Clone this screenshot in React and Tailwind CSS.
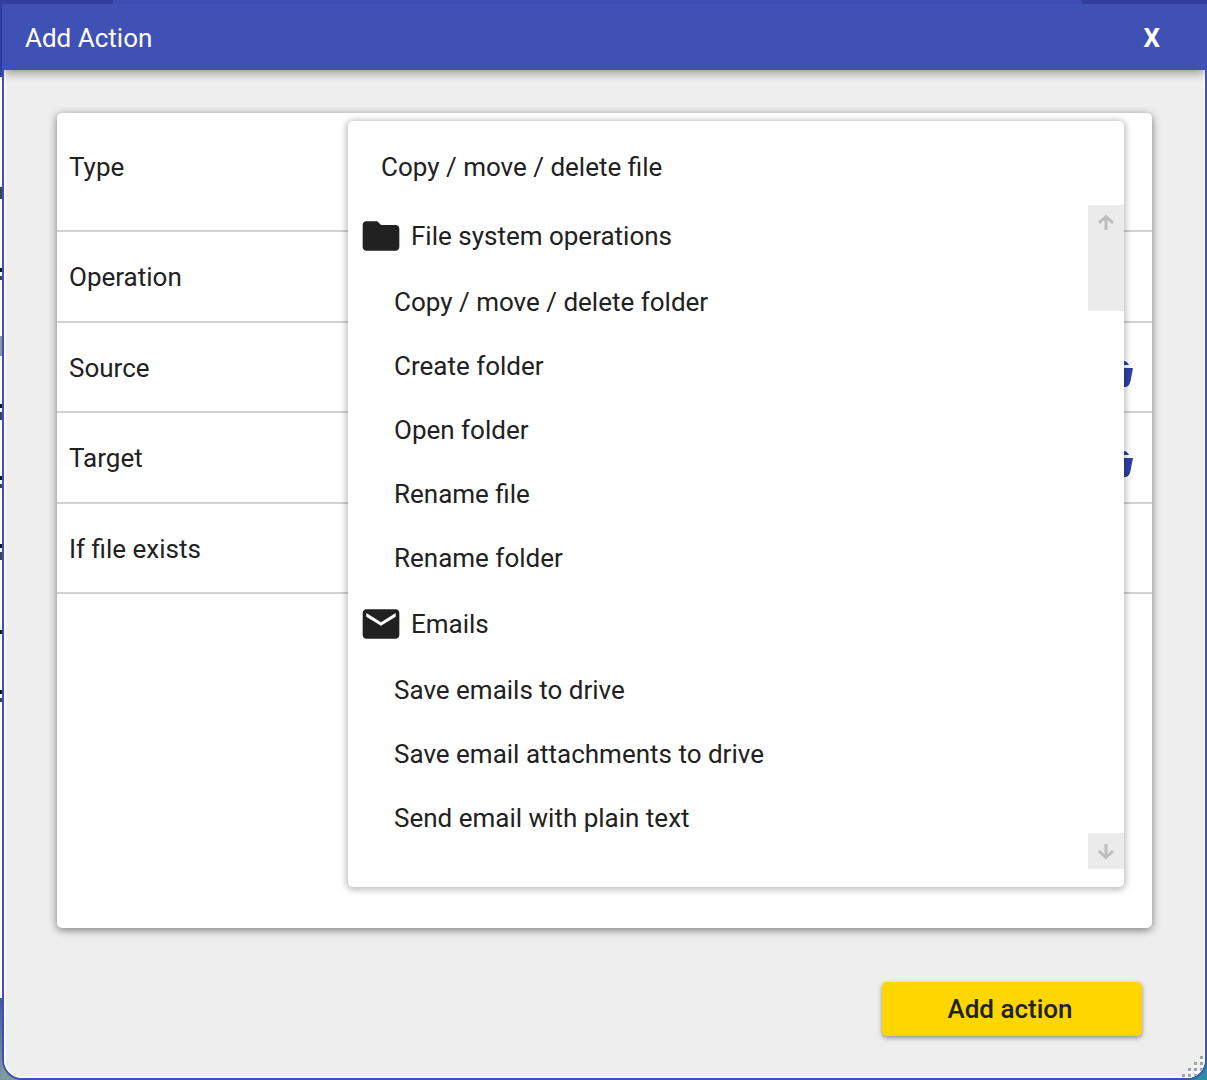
import React from "react";
import { MdFolder, MdEmail } from "react-icons/md";

const groups = [
  {
    label: "File system operations",
    Icon: MdFolder,
    options: [
      "Copy / move / delete folder",
      "Create folder",
      "Open folder",
      "Rename file",
      "Rename folder",
    ],
  },
  {
    label: "Emails",
    Icon: MdEmail,
    options: [
      "Save emails to drive",
      "Save email attachments to drive",
      "Send email with plain text",
    ],
  },
];

const fields = [
  { label: "Operation" },
  { label: "Source", removable: true },
  { label: "Target", removable: true },
  { label: "If file exists" },
];

/* Sliver of the window behind the dialog's left edge */
function BackgroundEdge() {
  return (
    <div className="flex w-0.5 shrink-0 flex-col bg-white" aria-hidden="true">
      <div className="h-[77px] bg-[#303f9f]" />
      <div className="mt-[110px] h-3 bg-[#3a4256]" />
      <div className="mt-[69px] h-1 bg-[#111827]" />
      <div className="mt-1 h-1 bg-[#3a4256]" />
      <div className="mt-14 h-5 bg-[#8c94a6]" />
      <div className="mt-12 h-1 bg-[#111827]" />
      <div className="mt-1 h-2 bg-[#3a4256]" />
      <div className="mt-14 h-1 bg-[#111827]" />
      <div className="mt-1 h-1 bg-[#3a4256]" />
      <div className="mt-14 h-1 bg-[#111827]" />
      <div className="mt-1 h-2 bg-[#3a4256]" />
      <div className="mt-[70px] h-1 bg-[#111827]" />
      <div className="mt-14 h-1 bg-[#111827]" />
      <div className="mt-1 h-1 bg-[#3a4256]" />
      <div className="h-[296px]" />
      <div className="flex-1 bg-linear-to-b from-[#4558a0] to-[#809b9f]" />
    </div>
  );
}

function TrashIcon() {
  return (
    <svg viewBox="0 0 26 28" className="h-7 w-[26px]" fill="currentColor" aria-hidden="true">
      <path d="M9 1h8c2 0 3.500 1.500 5 4H4c1.500-2.500 3-4 5-4z" />
      <path d="M0 8h26l-2.500 13c-.8 4-2.800 6-5.500 6H8c-2.700 0-4.700-2-5.500-6z" />
    </svg>
  );
}

function ArrowIcon({ down }) {
  return (
    <svg viewBox="0 0 24 24" className="size-6" fill="none" stroke="currentColor" strokeWidth="3" aria-hidden="true">
      {down ? <path d="M12 5v13M5 12l7 6.500 7-6.500" /> : <path d="M12 19V6M5 12l7-6.500 7 6.500" />}
    </svg>
  );
}

function ResizeGrip() {
  return (
    <svg viewBox="0 0 24 24" className="absolute right-0 bottom-0 size-6" aria-hidden="true">
      <g fill="#ffffff">
        <path d="M19 3h4v4h-4zM13 9h4v4h-4zM19 9h4v4h-4zM7 15h4v4H7zM13 15h4v4h-4zM19 15h4v4h-4zM1 20h4v4H1zM7 20h4v4H7zM13 20h4v4h-4z" />
      </g>
      <g fill="#9aa3b2">
        <path d="M19 2h3v3h-3zM13 8h3v3h-3zM19 8h3v3h-3zM7 14h3v3H7zM13 14h3v3h-3zM19 14h3v3h-3zM1 20h3v3H1zM7 20h3v3H7zM13 20h3v3h-3z" />
      </g>
    </svg>
  );
}

function TypeMenu() {
  return (
    <div className="absolute top-2 right-7 left-[291px] rounded-[5px] bg-white pb-[18px] shadow-[0_1px_6px_2px_rgba(0,0,0,0.25)]">
      <button
        type="button"
        id="type"
        aria-haspopup="listbox"
        aria-expanded="true"
        className="flex h-[81px] w-full items-center px-[33px] pt-2.5 text-left"
      >
        Copy / move / delete file
      </button>
      <div className="flex">
        <div role="listbox" aria-labelledby="type-label" className="min-w-0 flex-1">
          {groups.map(({ label, Icon, options }) => (
            <div key={label} role="group" aria-label={label}>
              <div className="flex h-[68px] items-center gap-2 pl-[11px]">
                <Icon className="size-11 text-[#212121]" />
                <span>{label}</span>
              </div>
              {options.map((option) => (
                <button
                  key={option}
                  type="button"
                  role="option"
                  aria-selected="false"
                  className="flex h-16 w-full items-center pl-[46px] text-left"
                >
                  {option}
                </button>
              ))}
            </div>
          ))}
        </div>
        <div className="mt-[3px] flex h-[664px] w-9 shrink-0 flex-col justify-between text-[#bdbdbd]">
          <div className="h-[106px] bg-[#ebebeb]">
            <button type="button" aria-label="Scroll up" className="grid size-9 place-items-center">
              <ArrowIcon />
            </button>
          </div>
          <button type="button" aria-label="Scroll down" className="grid size-9 place-items-center bg-[#ebebeb]">
            <ArrowIcon down />
          </button>
        </div>
      </div>
    </div>
  );
}

export default function App() {
  return (
    <div className="flex min-h-screen bg-linear-to-r from-[#809b9f] to-[#2a8ba5] font-['Roboto',sans-serif] text-[26px] leading-8 text-[#212121]">
      <BackgroundEdge />
      <div className="flex min-w-0 flex-1 flex-col">
        <div className="flex h-1 bg-[#3d4db3]" aria-hidden="true">
          <div className="w-[111px] bg-[#303f9f]" />
          <div className="ml-auto w-[125px] bg-[#303f9f]" />
        </div>
        <div role="dialog" aria-labelledby="title" className="relative flex flex-1 flex-col overflow-hidden rounded-b-[20px] border-2 border-t-0 border-[#3f51b5] bg-[#eeeeee]">
          <header className="relative flex h-[66px] items-center justify-between bg-[#3f51b5] pt-0.5 pr-[45px] pl-[21px] text-white shadow-[0_2px_10px_rgba(0,0,0,0.45)]">
            <h1 id="title">Add Action</h1>
            <button type="button" aria-label="Close" className="font-bold">X</button>
          </header>
          <main className="flex flex-1 flex-col rounded-b-[18px] border-2 border-t-0 border-[#f8f8ff] px-[51px] pt-[43px] pb-10">
            <section className="relative min-h-[815px] flex-1 rounded-[5px] bg-white shadow-[0_2px_8px_rgba(0,0,0,0.5)]">
              <div className="flex h-[119px] items-center border-b-2 border-[#d2d2d2] pb-2.5 pl-3">
                <label id="type-label" htmlFor="type">Type</label>
              </div>
              <div className="grid h-[362px] grid-rows-4">
                {fields.map(({ label, removable }) => (
                  <div key={label} className="flex items-center justify-between border-b-2 border-[#d2d2d2] pt-0.5 pr-[19px] pl-3">
                    <span>{label}</span>
                    {removable && (
                      <button type="button" aria-label={"Clear " + label} className="pt-3 text-[#303fa8]">
                        <TrashIcon />
                      </button>
                    )}
                  </div>
                ))}
              </div>
              <TypeMenu />
            </section>
            <footer className="mt-[54px] flex justify-end pr-2.5">
              <button type="button" className="h-[54px] w-[260px] rounded-[5px] bg-[#ffd600] pr-1 font-medium shadow-[0_2px_5px_rgba(0,0,0,0.4)]">
                Add action
              </button>
            </footer>
          </main>
          <ResizeGrip />
        </div>
      </div>
    </div>
  );
}
